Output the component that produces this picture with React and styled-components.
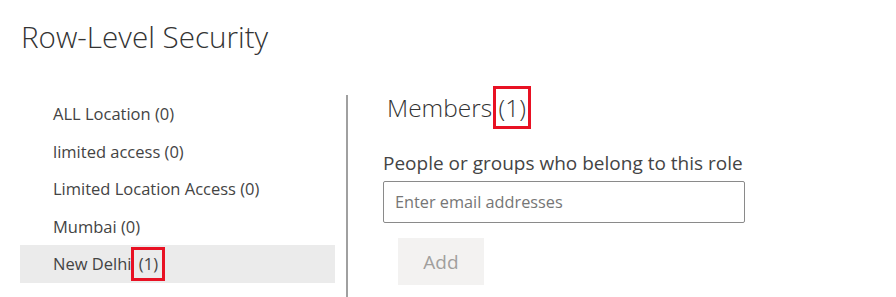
import styled, { createGlobalStyle } from "styled-components";

const roles = [
  { id: 1, name: "ALL Location", count: 0 },
  { id: 2, name: "limited access", count: 0 },
  { id: 3, name: "Limited Location Access", count: 0 },
  { id: 4, name: "Mumbai", count: 0 },
  { id: 5, name: "New Delhi", count: 1, selected: true, marked: true },
];

const GlobalStyle = createGlobalStyle`
  html, body {
    margin: 0;
    padding: 0;
    background: #ffffff;
  }
  body {
    font-family: "Open Sans", "Noto Sans", sans-serif;
    color: #444444;
  }
`;

const Page = styled.div`
  width: 896px;
  height: 297px;
  overflow: hidden;
  padding: 17px 0 0 20px;
  box-sizing: border-box;
`;

const Title = styled.h1`
  margin: 0 0 0 1px;
  font-size: 29.6px;
  font-weight: 300;
  color: #333333;
  line-height: 40px;
`;

const Body = styled.div`
  display: flex;
  align-items: flex-start;
  margin-top: 29px;
`;

const RoleList = styled.ul`
  list-style: none;
  margin: 9px 0 0;
  padding: 0;
  width: 315px;
`;

const RoleItem = styled.li`
  height: 37.5px;
  display: flex;
  align-items: center;
  padding-left: 33px;
  font-size: 16.5px;
  color: #444444;
  white-space: pre;
  background: ${(p) => (p.$selected ? "#ebebeb" : "transparent")};
`;

const Marked = styled.span`
  display: inline-flex;
  align-items: center;
  justify-content: center;
  border: 3px solid #e81123;
  box-sizing: border-box;
  width: ${(p) => p.$w}px;
  height: ${(p) => p.$h}px;
  margin-left: ${(p) => p.$gap}px;
`;

const Divider = styled.div`
  width: 2px;
  background: #a0a0a0;
  margin: 9px 0 0 11px;
  height: 210px;
`;

const Panel = styled.section`
  padding-left: 35px;
  width: 362px;
`;

const Heading = styled.h2`
  margin: 0 0 0 4px;
  display: flex;
  align-items: center;
  height: 43px;
  font-size: 24.5px;
  font-weight: 300;
  color: #333333;
`;

const Label = styled.div`
  margin-top: 22px;
  font-size: 19px;
  color: #444444;
  line-height: 24px;
  white-space: nowrap;
`;

const EmailInput = styled.input`
  display: block;
  margin-top: 6px;
  width: 362px;
  height: 42px;
  box-sizing: border-box;
  border: 1px solid #8a8a8a;
  border-radius: 2px;
  padding: 0 11px;
  font-family: "Open Sans", "Noto Sans", sans-serif;
  font-size: 16.3px;
  color: #444444;
  outline: none;

  &::placeholder {
    color: #767676;
  }
`;

const AddButton = styled.button`
  display: block;
  margin: 15px 0 0 15px;
  width: 86px;
  height: 47px;
  border: none;
  background: #f3f2f1;
  color: #a19f9d;
  font-family: "Open Sans", "Noto Sans", sans-serif;
  font-size: 19px;
  cursor: default;
`;

export default function App() {
  return (
    <>
      <GlobalStyle />
      <Page>
        <Title>Row-Level Security</Title>
        <Body>
          <RoleList>
            {roles.map((role) => (
              <RoleItem key={role.id} $selected={role.selected}>
                {role.name}
                {role.marked ? (
                  <Marked $w={34} $h={34} $gap={0}>
                    ({role.count})
                  </Marked>
                ) : (
                  ` (${role.count})`
                )}
              </RoleItem>
            ))}
          </RoleList>
          <Divider />
          <Panel>
            <Heading>
              Members
              <Marked $w={38} $h={43} $gap={1}>
                (1)
              </Marked>
            </Heading>
            <Label>People or groups who belong to this role</Label>
            <EmailInput placeholder="Enter email addresses" />
            <AddButton disabled>Add</AddButton>
          </Panel>
        </Body>
      </Page>
    </>
  );
}
